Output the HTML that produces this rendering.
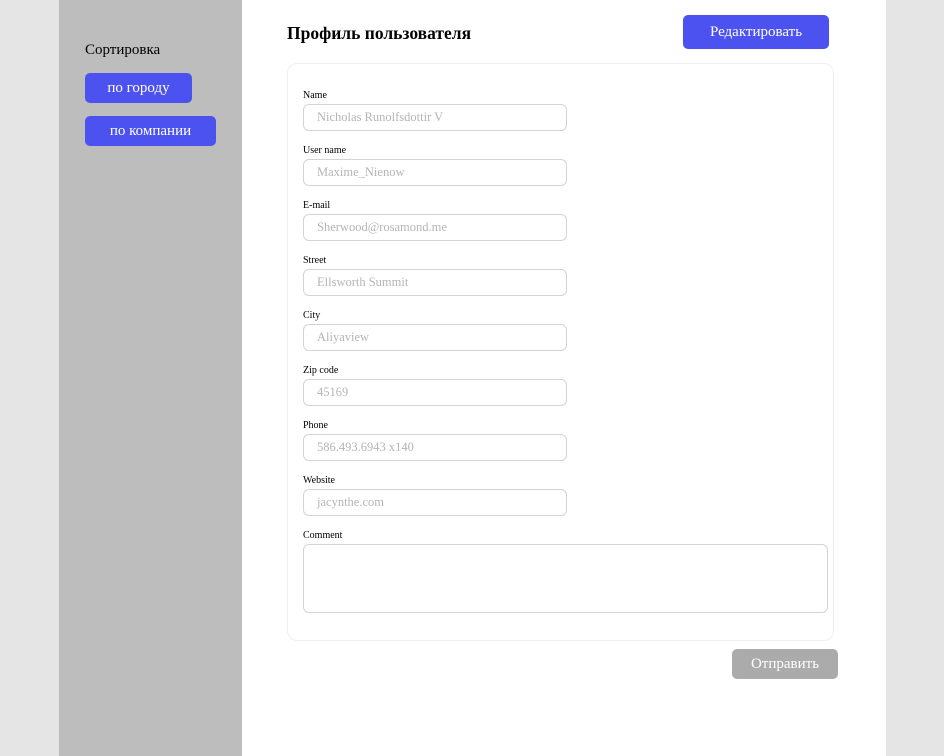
<!DOCTYPE html>
<html><head><meta charset="utf-8"><style>
*{box-sizing:border-box;margin:0;padding:0}
body{width:944px;height:756px;background:#e5e5e5;font-family:"Liberation Serif",serif;position:relative;overflow:hidden}
.side{position:absolute;left:59px;top:0;width:183px;height:756px;background:#bdbdbd}
.main{position:absolute;left:242px;top:0;width:644px;height:756px;background:#fff}
.abs{position:absolute}
.btn{position:absolute;background:#4c52f0;color:#fff;border-radius:5px;font-size:15px;display:flex;align-items:center;justify-content:center;line-height:1}
.lbl{position:absolute;left:303px;font-size:10px;color:#000}
.inp{position:absolute;left:303px;width:264px;height:27px;border:1px solid #d4d4d4;border-radius:6px;font-size:12.5px;color:#b5b5b5;padding-left:13px;display:flex;align-items:center}
</style></head><body>
<div class="side"></div>
<div class="main"></div>
<div class="abs" style="left:85px;top:42px;font-size:15px">Сортировка</div>
<div class="btn" style="left:85px;top:73px;width:107px;height:30px">по городу</div>
<div class="btn" style="left:85px;top:116px;width:131px;height:30px">по компании</div>
<div class="abs" style="left:287px;top:23px;font-size:17.5px;font-weight:bold">Профиль пользователя</div>
<div class="btn" style="left:683px;top:15px;width:146px;height:34px">Редактировать</div>
<div class="abs" style="left:287px;top:63px;width:547px;height:578px;border:1px solid #efefef;border-radius:10px"></div>
<div class="lbl" style="top:90px">Name</div><div class="inp" style="top:104px">Nicholas Runolfsdottir V</div>
<div class="lbl" style="top:145px">User name</div><div class="inp" style="top:159px">Maxime_Nienow</div>
<div class="lbl" style="top:200px">E-mail</div><div class="inp" style="top:214px">Sherwood@rosamond.me</div>
<div class="lbl" style="top:255px">Street</div><div class="inp" style="top:269px">Ellsworth Summit</div>
<div class="lbl" style="top:310px">City</div><div class="inp" style="top:324px">Aliyaview</div>
<div class="lbl" style="top:365px">Zip code</div><div class="inp" style="top:379px">45169</div>
<div class="lbl" style="top:420px">Phone</div><div class="inp" style="top:434px">586.493.6943 x140</div>
<div class="lbl" style="top:475px">Website</div><div class="inp" style="top:489px">jacynthe.com</div>
<div class="lbl" style="top:530px">Comment</div><div class="inp" style="top:544px;width:525px;height:69px"></div>
<div class="btn" style="left:732px;top:649px;width:106px;height:30px;background:#ababab">Отправить</div>
</body></html>
